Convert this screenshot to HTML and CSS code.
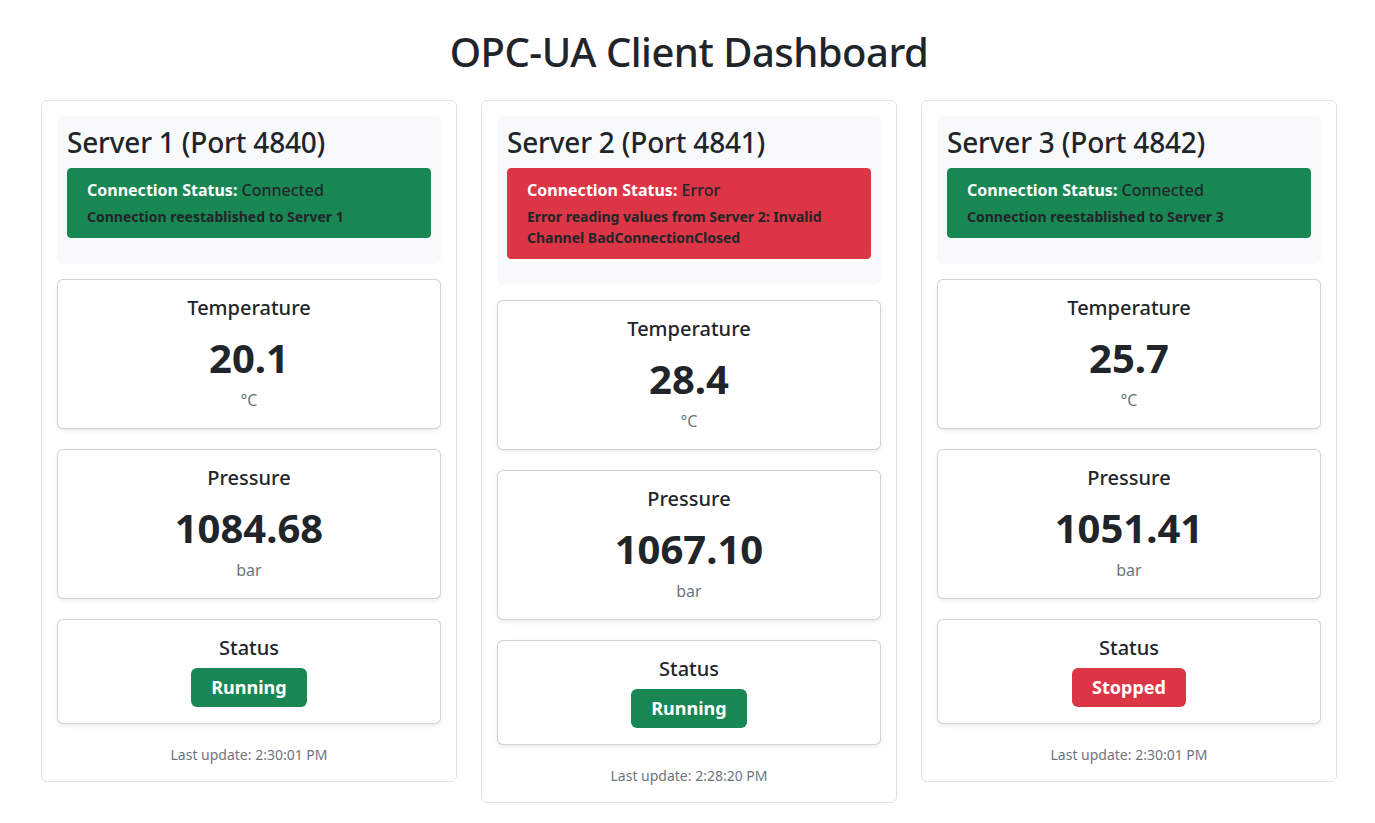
FILE: index.html
```html
<!DOCTYPE html>
<html lang="en">
<head>
<meta charset="utf-8">
<title>OPC-UA Client Dashboard</title>
<link rel="stylesheet" href="styles.css">
</head>
<body>
<main class="container">
  <h1 class="page-title">OPC-UA Client Dashboard</h1>
  <div class="servers">
    <section class="server-card">
      <div class="server-header">
        <h3 class="server-title">Server 1 (Port 4840)</h3>
        <div class="alert alert-success">
          <div class="alert-line"><strong class="alert-label">Connection Status:</strong> Connected</div>
          <small class="alert-msg">Connection reestablished to Server 1</small>
        </div>
      </div>
      <div class="metric">
        <h5 class="metric-name">Temperature</h5>
        <div class="metric-value">20.1</div>
        <div class="metric-unit">°C</div>
      </div>
      <div class="metric">
        <h5 class="metric-name">Pressure</h5>
        <div class="metric-value">1084.68</div>
        <div class="metric-unit">bar</div>
      </div>
      <div class="metric">
        <h5 class="metric-name">Status</h5>
        <span class="badge badge-success">Running</span>
      </div>
      <p class="last-update">Last update: 2:30:01 PM</p>
    </section>

    <section class="server-card">
      <div class="server-header">
        <h3 class="server-title">Server 2 (Port 4841)</h3>
        <div class="alert alert-danger">
          <div class="alert-line"><strong class="alert-label">Connection Status:</strong> Error</div>
          <small class="alert-msg">Error reading values from Server 2: Invalid Channel BadConnectionClosed</small>
        </div>
      </div>
      <div class="metric">
        <h5 class="metric-name">Temperature</h5>
        <div class="metric-value">28.4</div>
        <div class="metric-unit">°C</div>
      </div>
      <div class="metric">
        <h5 class="metric-name">Pressure</h5>
        <div class="metric-value">1067.10</div>
        <div class="metric-unit">bar</div>
      </div>
      <div class="metric">
        <h5 class="metric-name">Status</h5>
        <span class="badge badge-success">Running</span>
      </div>
      <p class="last-update">Last update: 2:28:20 PM</p>
    </section>

    <section class="server-card">
      <div class="server-header">
        <h3 class="server-title">Server 3 (Port 4842)</h3>
        <div class="alert alert-success">
          <div class="alert-line"><strong class="alert-label">Connection Status:</strong> Connected</div>
          <small class="alert-msg">Connection reestablished to Server 3</small>
        </div>
      </div>
      <div class="metric">
        <h5 class="metric-name">Temperature</h5>
        <div class="metric-value">25.7</div>
        <div class="metric-unit">°C</div>
      </div>
      <div class="metric">
        <h5 class="metric-name">Pressure</h5>
        <div class="metric-value">1051.41</div>
        <div class="metric-unit">bar</div>
      </div>
      <div class="metric">
        <h5 class="metric-name">Status</h5>
        <span class="badge badge-danger">Stopped</span>
      </div>
      <p class="last-update">Last update: 2:30:01 PM</p>
    </section>
  </div>
</main>
</body>
</html>
```

FILE: styles.css
```css
* { box-sizing: border-box; }

body {
  margin: 0;
  background: #ffffff;
  color: #212529;
  font-family: "Noto Sans", "DejaVu Sans", sans-serif;
  font-size: 16px;
  line-height: 1.5;
}

.container {
  width: 1296px;
  margin: 0 auto;
  padding: 28px 0 24px;
  position: relative;
  left: 1.5px;
}

.page-title {
  margin: 0 0 24px;
  text-align: center;
  font-size: 40px;
  font-weight: 500;
  line-height: 1.2;
  letter-spacing: -0.5px;
}

.servers {
  display: flex;
  gap: 24px;
  align-items: flex-start;
}

.server-card {
  flex: 0 0 416px;
  border: 1px solid #dee2e6;
  border-radius: 6px;
  padding: 15px 15px 16px;
  background: #fff;
}

.server-header {
  background: #f8f9fa;
  border-radius: 6px;
  padding: 10px;
  margin-bottom: 15px;
}

.server-title {
  margin: 0 0 8px;
  font-size: 28px;
  font-weight: 500;
  line-height: 1.2;
  letter-spacing: -0.2px;
}

.alert {
  border: 1px solid transparent;
  border-radius: 4px;
  padding: 9px 19px 10px;
  margin-bottom: 16px;
  color: #212529;
  font-weight: 500;
}

.alert-success { background: #198754; border-color: #198754; }
.alert-danger { background: #dc3545; border-color: #dc3545; }

.alert-line { line-height: 24px; }

.alert-label { color: #ffffff; font-weight: 700; }

.alert-msg {
  display: block;
  margin-top: 4px;
  font-size: 14px;
  font-weight: 700;
  line-height: 21px;
}

.metric {
  border: 1px solid rgba(0, 0, 0, 0.175);
  border-radius: 6px;
  box-shadow: 0 2px 4px rgba(0, 0, 0, 0.075);
  padding: 16px;
  margin-bottom: 20px;
  text-align: center;
  background: #fff;
}

.metric-name {
  margin: 0 0 8px;
  font-size: 20px;
  font-weight: 500;
  line-height: 1.2;
}

.metric-value {
  font-size: 40px;
  font-weight: 700;
  line-height: 1.5;
}

.metric-unit {
  color: #6c757d;
}

.badge {
  display: inline-block;
  color: #ffffff;
  font-size: 18px;
  font-weight: 700;
  line-height: 23px;
  padding: 8px 20px;
  border-radius: 6px;
}

.badge-success { background: #198754; }
.badge-danger { background: #dc3545; }

.last-update {
  margin: 0;
  text-align: center;
  font-size: 14px;
  line-height: 21px;
  color: #6c757d;
}
```
